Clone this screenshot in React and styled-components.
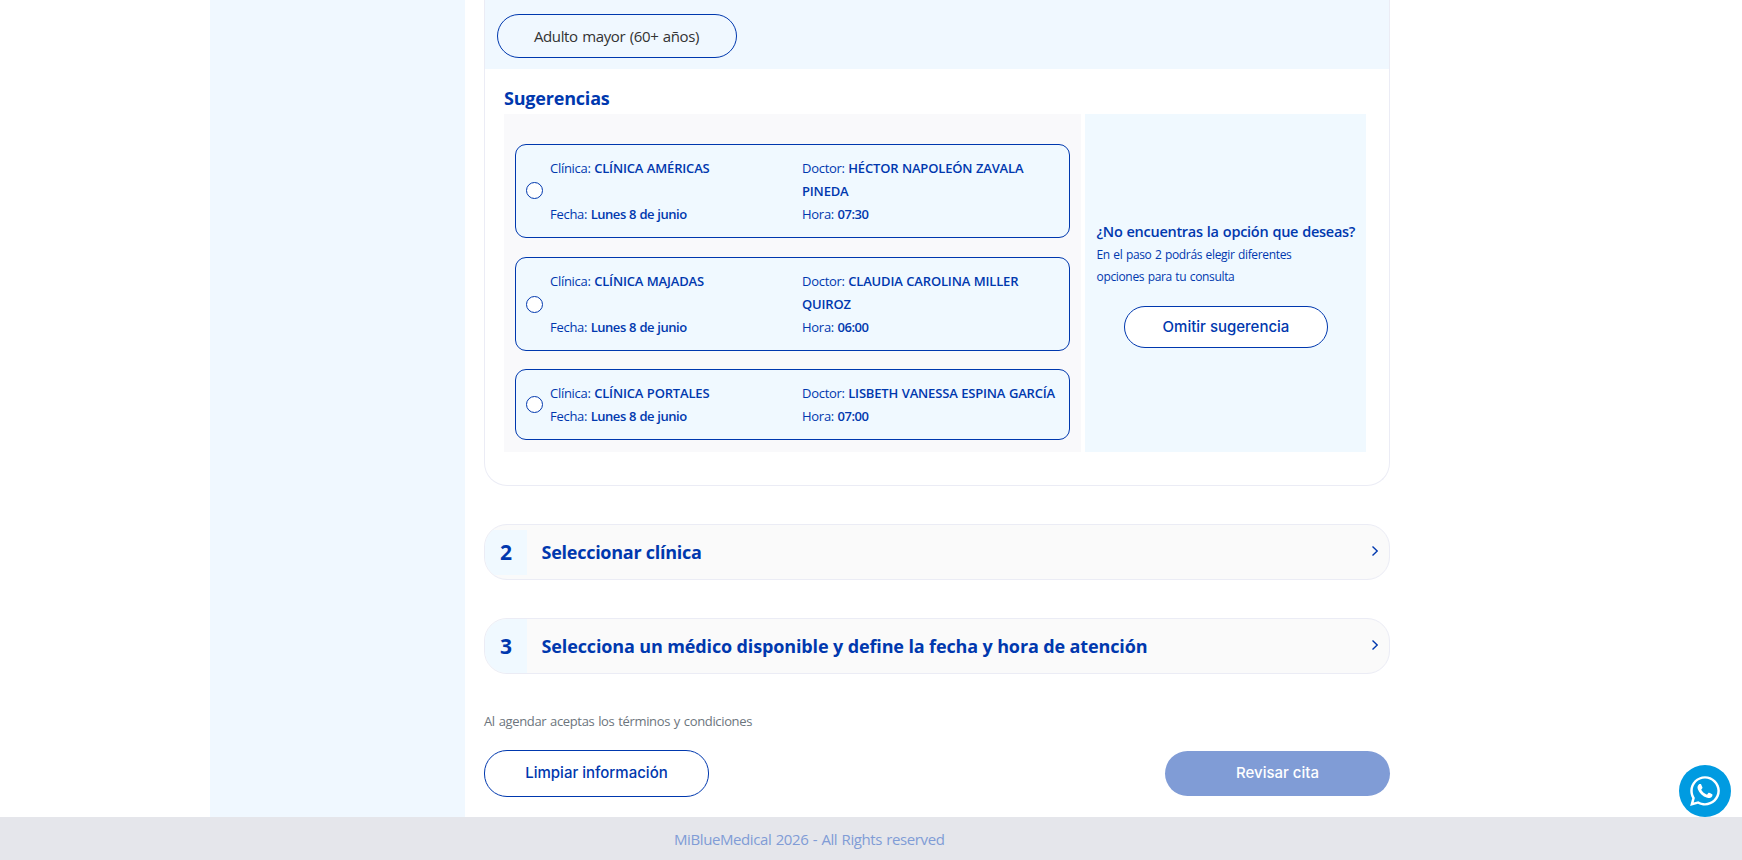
import React from "react";
import styled, {createGlobalStyle, css} from "styled-components";
import {FaWhatsapp} from "react-icons/fa";

const GlobalStyle = createGlobalStyle`
	* {
		box-sizing: border-box;
	}

	body {
		margin: 0;
		background: #fff;
		font-family: "Open Sans", "Noto Sans", sans-serif;
		color: #0038ae;
	}
`;

/*

Page layout

*/
const Page = styled.div`
	display: flex;
	flex-direction: column;
	height: 860px;
	overflow: hidden;
`;

const Body = styled.div`
	display: flex;
	height: 817px;
	padding-left: 210px;
`;

const Sidebar = styled.aside`
	width: 255px;
	background: #f0f8ff;
`;

const Content = styled.main`
	width: 906px;
	margin-left: 19px;
`;

const Footer = styled.footer`
	height: 43px;
	padding-left: 674px;
	background: #e5e6eb;
	color: #809cd6;
	font-size: 15px;
	line-height: 45px;
	letter-spacing: -0.4px;
	word-spacing: 0.8px;
`;

/*

Step one: age group and suggestions

*/
const StepPanel = styled.section`
	height: 486px;
	border: 1px solid #ebecf5;
	border-top: none;
	border-radius: 0 0 23px 23px;
`;

const AgeGroup = styled.div`
	height: 69px;
	padding: 14px 12px 0;
	background: #f0f8ff;
`;

const AgeButton = styled.button`
	width: 240px;
	height: 44px;
	padding: 0 1px 0 0;
	border: 1px solid #0038ae;
	border-radius: 22px;
	background: transparent;
	color: #333;
	font-family: inherit;
	font-size: 15px;
	letter-spacing: -0.35px;
	word-spacing: 0.8px;
`;

const SuggestionsTitle = styled.h2`
	height: 45px;
	margin: 0;
	padding: 15px 0 0 19px;
	font-size: 18px;
	font-weight: 700;
	line-height: 28px;
	letter-spacing: -0.2px;
`;

const Suggestions = styled.div`
	display: grid;
	grid-template-columns: 577px 281px;
	column-gap: 4px;
	height: 338px;
	margin-left: 19px;
`;

const OptionList = styled.div`
	display: flex;
	flex-direction: column;
	gap: 18px;
	padding: 30px 11px 0;
	background: #f9f9fb;
`;

const Option = styled.label`
	display: flex;
	align-items: center;
	padding: 12px 0 11px 10px;
	border: 1px solid #0038ae;
	border-radius: 11px;
	background: #f0f9ff;
	font-size: 13px;
	line-height: 23px;

	&:first-child {
		margin-bottom: 1px;
		padding: 11.5px 0 11.5px 10px;
	}
`;

const Radio = styled.span`
	width: 17px;
	height: 17px;
	margin: 0 7px 1px 0;
	border: 1px solid #0038ae;
	border-radius: 50%;
	background: #fff;
`;

const OptionGrid = styled.div`
	display: grid;
	grid-template-columns: 252px 258px;
`;

const Field = styled.div`
	letter-spacing: -0.28px;
	word-spacing: 0.4px;
`;

const Value = styled.span`
	font-weight: 600;
	letter-spacing: ${props => (props.$upper ? "-0.17px" : "-0.46px")};
`;

const SkipPanel = styled.div`
	display: flex;
	flex-direction: column;
	padding: 106px 11px 0 12px;
	background: #f0f9ff;
`;

const SkipTitle = styled.h3`
	margin: 0 0 0 -0.5px;
	font-size: 14.5px;
	font-weight: 600;
	line-height: 24px;
	letter-spacing: -0.28px;
	word-spacing: 0.6px;
	white-space: nowrap;
`;

const SkipText = styled.p`
	width: 210px;
	margin: 0 0 18px -0.5px;
	font-size: 12px;
	line-height: 22px;
	letter-spacing: -0.34px;
	word-spacing: 0.7px;
`;

/*

Collapsed steps

*/
const Step = styled.section`
	display: flex;
	align-items: center;
	height: 56px;
	margin-top: 38px;
	border: 1px solid #ebecf5;
	border-radius: 23px;
	background: #fafafa;
	overflow: hidden;
`;

const StepNumber = styled.span`
	display: flex;
	align-items: center;
	justify-content: center;
	width: 42px;
	height: ${props => (props.$full ? "100%" : "45px")};
	background: #f0f9ff;
	font-size: 21px;
	font-weight: 700;
`;

const StepTitle = styled.h2`
	flex: 1;
	margin: 0 0 0 14.5px;
	font-size: 18px;
	font-weight: 700;
	letter-spacing: ${props => props.$tracking};
`;

const Chevron = styled.svg`
	width: 8px;
	height: 12px;
	margin: 0 10px 2px 0;
	fill: none;
	stroke: #0038ae;
	stroke-width: 1.4;
`;

/*

Bottom actions

*/
const Terms = styled.p`
	margin: 36px 0 0;
	color: #6c757d;
	font-size: 13px;
	line-height: 23px;
	letter-spacing: -0.35px;
	word-spacing: 0.8px;
`;

const Actions = styled.div`
	display: flex;
	align-items: center;
	justify-content: space-between;
	margin-top: 17px;
`;

const Button = styled.button`
	width: 225px;
	height: 47px;
	padding: 0 0 2px;
	border: 1px solid #0038ae;
	border-radius: 23px;
	background: #fff;
	color: #0038ae;
	font-family: "Inter", sans-serif;
	font-size: 15px;
	font-weight: 500;

	${props =>
		props.$small &&
		css`
			align-self: center;
			width: 204px;
			height: 42px;
			border-radius: 21px;
		`}

	&:disabled {
		height: 45px;
		border: none;
		background: #809cd6;
		color: #fff;
	}
`;

// Floating chat shortcut in the corner of the window
const ChatButton = styled.a`
	position: fixed;
	right: 11px;
	bottom: 43px;
	display: flex;
	align-items: center;
	justify-content: center;
	width: 52px;
	height: 52px;
	border-radius: 50%;
	background: #009be1;
	color: #fff;
`;

const options = [
	{clinic: "CLÍNICA AMÉRICAS", doctor: "HÉCTOR NAPOLEÓN ZAVALA PINEDA", date: "Lunes 8 de junio", time: "07:30"},
	{clinic: "CLÍNICA MAJADAS", doctor: "CLAUDIA CAROLINA MILLER QUIROZ", date: "Lunes 8 de junio", time: "06:00"},
	{clinic: "CLÍNICA PORTALES", doctor: "LISBETH VANESSA ESPINA GARCÍA", date: "Lunes 8 de junio", time: "07:00"},
];

const ChevronRight = () => (
	<Chevron viewBox="0 0 8 12">
		<path d="M1.5 1.5 6.2 6 1.5 10.5" />
	</Chevron>
);

export default function App() {
	return (
		<Page>
			<GlobalStyle />
			<Body>
				<Sidebar />
				<Content>
					<StepPanel>
						<AgeGroup>
							<AgeButton>Adulto mayor (60+ años)</AgeButton>
						</AgeGroup>
						<SuggestionsTitle>Sugerencias</SuggestionsTitle>
						<Suggestions>
							<OptionList>
								{options.map(option => (
									<Option key={option.clinic}>
										<Radio />
										<OptionGrid>
											<Field>
												Clínica: <Value $upper>{option.clinic}</Value>
											</Field>
											<Field>
												Doctor: <Value $upper>{option.doctor}</Value>
											</Field>
											<Field>
												Fecha: <Value>{option.date}</Value>
											</Field>
											<Field>
												Hora: <Value>{option.time}</Value>
											</Field>
										</OptionGrid>
									</Option>
								))}
							</OptionList>
							<SkipPanel>
								<SkipTitle>¿No encuentras la opción que deseas?</SkipTitle>
								<SkipText>En el paso 2 podrás elegir diferentes opciones para tu consulta</SkipText>
								<Button $small>Omitir sugerencia</Button>
							</SkipPanel>
						</Suggestions>
					</StepPanel>

					<Step>
						<StepNumber>2</StepNumber>
						<StepTitle $tracking="-0.26px">Seleccionar clínica</StepTitle>
						<ChevronRight />
					</Step>
					<Step>
						<StepNumber $full>3</StepNumber>
						<StepTitle $tracking="-0.13px">
							Selecciona un médico disponible y define la fecha y hora de atención
						</StepTitle>
						<ChevronRight />
					</Step>

					<Terms>Al agendar aceptas los términos y condiciones</Terms>
					<Actions>
						<Button>Limpiar información</Button>
						<Button disabled>Revisar cita</Button>
					</Actions>
				</Content>
			</Body>
			<Footer>MiBlueMedical 2026 - All Rights reserved</Footer>
			<ChatButton>
				<FaWhatsapp size={34} />
			</ChatButton>
		</Page>
	);
}
